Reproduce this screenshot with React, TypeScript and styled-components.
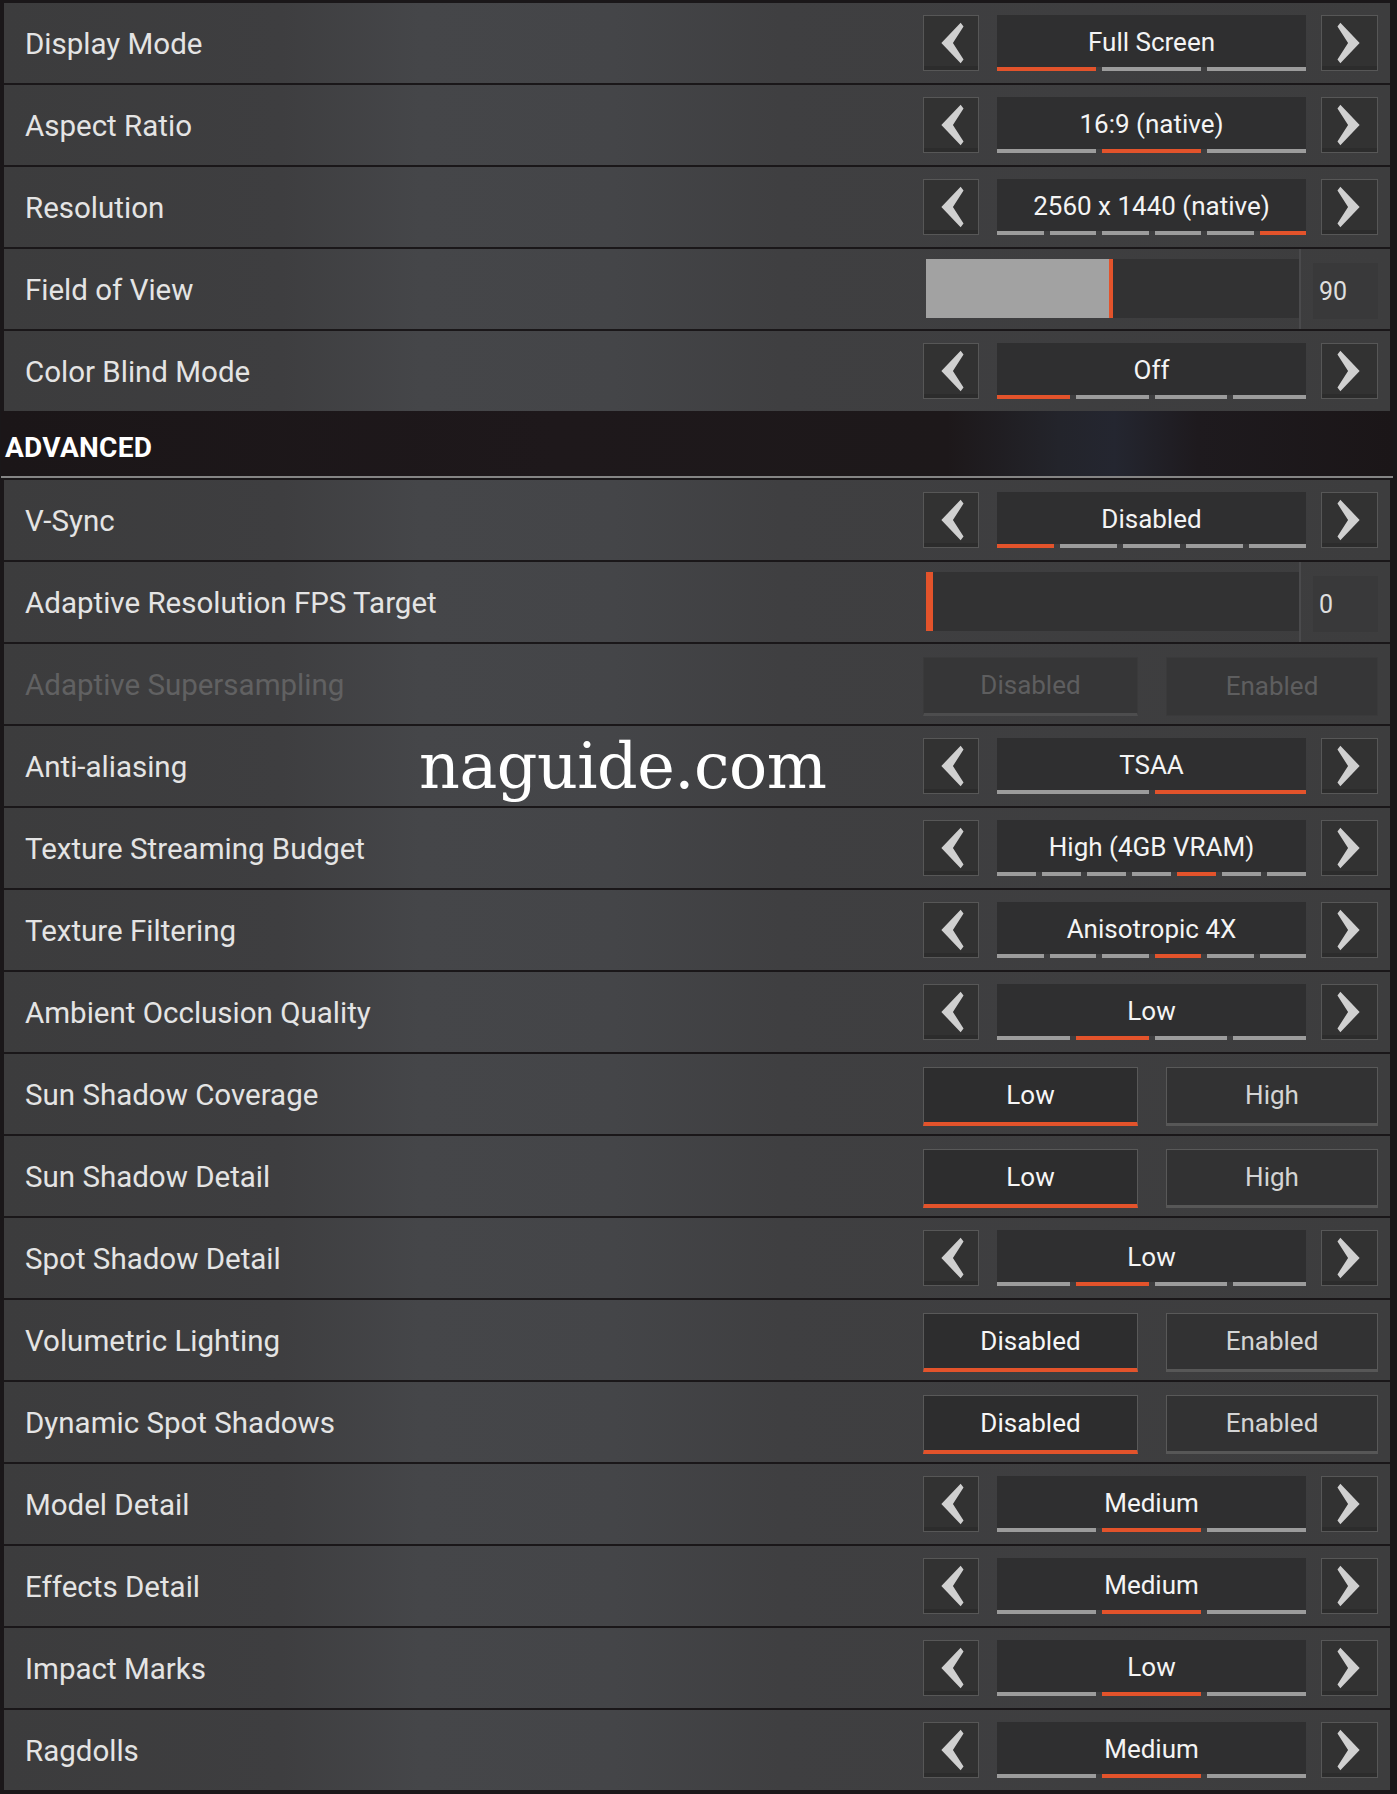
import { createGlobalStyle, styled } from "styled-components";

const GlobalStyle = createGlobalStyle`
  html, body {
    margin: 0;
    padding: 0;
    background: #1a1719;
  }
  * {
    box-sizing: border-box;
  }
`;

type Setting =
  | { kind: "arrows"; label: string; value: string; steps: number; active: number }
  | { kind: "slider"; label: string; value: number; fill: number; thumb: number }
  | { kind: "toggle"; label: string; options: [string, string]; active: number; disabled?: boolean };

const general: Setting[] = [
  { kind: "arrows", label: "Display Mode", value: "Full Screen", steps: 3, active: 0 },
  { kind: "arrows", label: "Aspect Ratio", value: "16:9 (native)", steps: 3, active: 1 },
  { kind: "arrows", label: "Resolution", value: "2560 x 1440 (native)", steps: 6, active: 5 },
  { kind: "slider", label: "Field of View", value: 90, fill: 49, thumb: 4 },
  { kind: "arrows", label: "Color Blind Mode", value: "Off", steps: 4, active: 0 },
];

const advanced: Setting[] = [
  { kind: "arrows", label: "V-Sync", value: "Disabled", steps: 5, active: 0 },
  { kind: "slider", label: "Adaptive Resolution FPS Target", value: 0, fill: 0, thumb: 7 },
  { kind: "toggle", label: "Adaptive Supersampling", options: ["Disabled", "Enabled"], active: 0, disabled: true },
  { kind: "arrows", label: "Anti-aliasing", value: "TSAA", steps: 2, active: 1 },
  { kind: "arrows", label: "Texture Streaming Budget", value: "High (4GB VRAM)", steps: 7, active: 4 },
  { kind: "arrows", label: "Texture Filtering", value: "Anisotropic 4X", steps: 6, active: 3 },
  { kind: "arrows", label: "Ambient Occlusion Quality", value: "Low", steps: 4, active: 1 },
  { kind: "toggle", label: "Sun Shadow Coverage", options: ["Low", "High"], active: 0 },
  { kind: "toggle", label: "Sun Shadow Detail", options: ["Low", "High"], active: 0 },
  { kind: "arrows", label: "Spot Shadow Detail", value: "Low", steps: 4, active: 1 },
  { kind: "toggle", label: "Volumetric Lighting", options: ["Disabled", "Enabled"], active: 0 },
  { kind: "toggle", label: "Dynamic Spot Shadows", options: ["Disabled", "Enabled"], active: 0 },
  { kind: "arrows", label: "Model Detail", value: "Medium", steps: 3, active: 1 },
  { kind: "arrows", label: "Effects Detail", value: "Medium", steps: 3, active: 1 },
  { kind: "arrows", label: "Impact Marks", value: "Low", steps: 3, active: 1 },
  { kind: "arrows", label: "Ragdolls", value: "Medium", steps: 3, active: 1 },
];

const Chevron = ({ dir }: { dir: "left" | "right" }) => (
  <svg width="54" height="54" viewBox="0 0 56 56">
    <polygon
      points={
        dir === "left"
          ? "38,7 41,11 30,28 41,45 38,49 18,28"
          : "18,7 15,11 26,28 15,45 18,49 38,28"
      }
      fill="#d0d0d0"
    />
  </svg>
);

const ArrowControl = ({ value, steps, active }: { value: string; steps: number; active: number }) => (
  <Controls>
    <ArrowBox>
      <Chevron dir="left" />
    </ArrowBox>

    <ValueBox>
      <ValueText>{value}</ValueText>
      <Steps>
        {Array.from({ length: steps }).map((_, i) => (
          <Step key={i} $active={i === active} />
        ))}
      </Steps>
    </ValueBox>

    <ArrowBox $wide>
      <Chevron dir="right" />
    </ArrowBox>
  </Controls>
);

const SliderControl = ({ value, fill, thumb }: { value: number; fill: number; thumb: number }) => (
  <Controls>
    <Track>
      <Fill style={{ width: `${fill}%` }} />
      <Thumb style={{ width: thumb }} />
    </Track>
    <Divider />
    <NumberBox>{value}</NumberBox>
  </Controls>
);

const ToggleControl = ({
  options,
  active,
  disabled,
}: {
  options: [string, string];
  active: number;
  disabled?: boolean;
}) => (
  <Controls $gap={28}>
    {options.map((option, i) => (
      <ToggleButton key={option} $active={i === active} $disabled={disabled}>
        {option}
      </ToggleButton>
    ))}
  </Controls>
);

const SettingRow = ({ setting }: { setting: Setting }) => (
  <Row>
    <Label $dim={setting.kind === "toggle" && setting.disabled}>{setting.label}</Label>

    {setting.kind === "arrows" && (
      <ArrowControl value={setting.value} steps={setting.steps} active={setting.active} />
    )}
    {setting.kind === "slider" && (
      <SliderControl value={setting.value} fill={setting.fill} thumb={setting.thumb} />
    )}
    {setting.kind === "toggle" && (
      <ToggleControl options={setting.options} active={setting.active} disabled={setting.disabled} />
    )}
  </Row>
);

export default function App() {
  return (
    <Page>
      <GlobalStyle />

      <Section>
        {general.map((setting) => (
          <SettingRow key={setting.label} setting={setting} />
        ))}
      </Section>

      <SectionHeader>ADVANCED</SectionHeader>

      <Section>
        {advanced.map((setting) => (
          <SettingRow key={setting.label} setting={setting} />
        ))}
      </Section>

      <Watermark>naguide.com</Watermark>
    </Page>
  );
}

const Page = styled.div`
  position: relative;
  width: 1397px;
  height: 1794px;
  padding: 3px 7px 0 4px;
  background: #1a1719;
  font-family: Roboto, "Liberation Sans", sans-serif;
  overflow: hidden;
`;

const Section = styled.div`
  display: flex;
  flex-direction: column;
  gap: 2px;
`;

const Row = styled.div`
  display: flex;
  align-items: center;
  justify-content: space-between;
  height: 80px;
  padding: 0 12px 0 21px;
  background: linear-gradient(
    90deg,
    #3c3c3d 0%,
    #3e3e40 20%,
    #454649 30%,
    #444548 44%,
    #3f3f41 56%,
    #3d3d3e 100%
  );
`;

const Label = styled.div<{ $dim?: boolean }>`
  color: ${({ $dim }) => ($dim ? "#616162" : "#e4e4e4")};
  font-size: 29.5px;
  letter-spacing: 0;
  padding-top: 1px;
`;

const Controls = styled.div<{ $gap?: number }>`
  display: flex;
  align-items: center;
  gap: ${({ $gap }) => $gap ?? 0}px;
  width: 455px;
  height: 100%;
`;

const ArrowBox = styled.div<{ $wide?: boolean }>`
  display: flex;
  align-items: center;
  justify-content: center;
  width: ${({ $wide }) => ($wide ? 57 : 56)}px;
  height: 56px;
  margin-left: ${({ $wide }) => ($wide ? 15 : 0)}px;
  border: 1px solid #575757;
  background: #323232;
  box-shadow: inset 0 -4px 0 #2c2c2c;
`;

const ValueBox = styled.div`
  display: flex;
  flex-direction: column;
  width: 309px;
  height: 56px;
  margin-left: 18px;
`;

const ValueText = styled.div`
  flex: 1;
  display: flex;
  align-items: center;
  justify-content: center;
  background: #2f2f30;
  color: #f4f4f4;
  font-size: 26px;
  padding-top: 2px;
`;

const Steps = styled.div`
  display: flex;
  gap: 6px;
  height: 4px;
`;

const Step = styled.div<{ $active: boolean }>`
  flex: 1;
  background: ${({ $active }) => ($active ? "#e3532b" : "#9c9c9c")};
`;

const Track = styled.div`
  position: relative;
  display: flex;
  align-self: stretch;
  flex: 1;
  margin: 10px 0 11px 3px;
  background: #323233;
`;

const Fill = styled.div`
  background: #a2a2a2;
`;

const Thumb = styled.div`
  background: #e3532b;
`;

const Divider = styled.div`
  align-self: stretch;
  width: 2px;
  background: #4a4a4c;
`;

const NumberBox = styled.div`
  display: flex;
  align-items: center;
  width: 65px;
  height: 56px;
  margin: 4px 0 0 12px;
  padding-left: 6px;
  background: #39393a;
  color: #dedede;
  font-size: 25px;
`;

const ToggleButton = styled.div<{ $active: boolean; $disabled?: boolean }>`
  display: flex;
  align-items: center;
  justify-content: center;
  flex: ${({ $active }) => ($active ? "0 0 215px" : "1")};
  height: 59px;
  margin-top: 4px;
  font-size: 26px;
  background: ${({ $active, $disabled }) =>
    $disabled ? "#363637" : $active ? "#2d2d2e" : "#323233"};
  color: ${({ $active, $disabled }) =>
    $disabled ? "#5e5e5f" : $active ? "#f6f6f6" : "#d4d4d4"};
  border: 1px solid ${({ $disabled }) => ($disabled ? "#3a3a3b" : "#595959")};
  border-bottom: ${({ $active, $disabled }) =>
    $disabled
      ? $active
        ? "3px solid #4d4d4e"
        : "1px solid #3a3a3b"
      : $active
        ? "4px solid #e3532b"
        : "3px solid #575757"};
`;

const SectionHeader = styled.div`
  display: flex;
  align-items: center;
  height: 67px;
  margin: 0 -3px 2px -3px;
  padding: 7px 0 0 4px;
  border-bottom: 2px solid #858585;
  background: linear-gradient(
    90deg,
    #1b1618 0%,
    #1e181b 40%,
    #1d181a 68%,
    #23242b 76%,
    #242630 80%,
    #1e1a1e 86%,
    #1b1618 100%
  );
  color: #ffffff;
  font-size: 28px;
  font-weight: 700;
  letter-spacing: 0.3px;
`;

const Watermark = styled.div`
  position: absolute;
  left: 419px;
  top: 734px;
  color: #ffffff;
  font-family: "DejaVu Serif", "Liberation Serif", serif;
  font-size: 63.5px;
  line-height: 64px;
  letter-spacing: -0.5px;
  pointer-events: none;
`;
